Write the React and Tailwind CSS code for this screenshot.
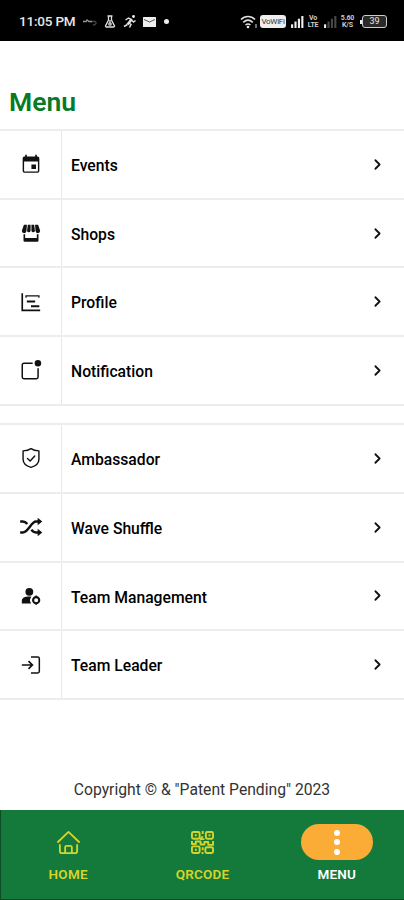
import { ChevronRight } from "lucide-react";

const icons = {
  events: (
    <path fill="currentColor" d="M20 3h-1V1h-2v2H7V1H5v2H4a2 2 0 0 0-2 2v15.500a2 2 0 0 0 2 2h16a2 2 0 0 0 2-2V5a2 2 0 0 0-2-2zm.3 17.500a.5.5 0 0 1-.5.500H4.200a.5.5 0 0 1-.5-.500V9h16.600zM18 12.500h-5.500V18H18z" />
  ),
  shops: (
    <g fill="currentColor">
      <path d="M3.500 2h3.600l-.5 7.400a2.700 2.700 0 0 1-5.600 0z" />
      <path d="M8.200 2h3.300v7.500a2.200 2.200 0 0 1-4.200 0z" />
      <path d="M12.500 2h3.300l.9 7.500a2.200 2.200 0 0 1-4.200 0z" />
      <path d="M16.900 2h3.600L23 9.400a2.700 2.700 0 0 1-5.600 0z" />
      <path d="M3 13.500h2V18h14v-4.500h2V21a1.500 1.500 0 0 1-1.500 1.500h-15A1.500 1.500 0 0 1 3 21z" />
    </g>
  ),
  profile: (
    <g fill="none" stroke="currentColor" strokeWidth="2">
      <path d="M1.500 1.500V22H23" />
      <path d="M6 7V4.500h15.500V7" strokeWidth="1.500" />
      <path d="M7 11.500h10M12 17h10" strokeWidth="2.400" />
    </g>
  ),
  notification: (
    <g fill="none" stroke="currentColor" strokeWidth="1.800">
      <path d="M14 4H3.500A2 2 0 0 0 1.500 6v14.500a2 2 0 0 0 2 2h15a2 2 0 0 0 2-2V10" />
      <circle cx="20.300" cy="3.800" r="3.900" fill="currentColor" stroke="none" />
    </g>
  ),
  ambassador: (
    <g fill="none" stroke="currentColor" strokeWidth="1.700" strokeLinecap="round" strokeLinejoin="round">
      <path d="M12 .800c2.700 2 5.700 2.600 9.500 2.600v10c0 5-3.500 8-9.500 9.800-6-1.800-9.500-4.800-9.500-9.800v-10C6.300 3.400 9.300 2.800 12 .8z" />
      <path d="m7.800 12.500 3.200 3 5.500-6" />
    </g>
  ),
  shuffle: (
    <g fill="none" stroke="currentColor" strokeWidth="3">
      <path d="M-1 5.500h3c2.500 0 4.300 1.400 5.600 3M-1 18.500h3C9 18.500 12 5.500 18 5.500h2.500M12.500 15.200c1.300 2 3 3.300 5.500 3.300h2.500" />
      <path d="M20 1v9l5.500-4.500zM20 14v9l5.500-4.500z" fill="currentColor" stroke="none" />
    </g>
  ),
  team: (
    <g fill="currentColor">
      <circle cx="10" cy="7" r="4.700" />
      <path d="M1 21v-3c0-3.800 3.500-5.300 9-5.300 1 0 1.800.1 2.500.2a6.500 6.500 0 0 0-.3 8.100z" />
      <circle cx="18.200" cy="17" r="3.700" fill="none" stroke="currentColor" strokeWidth="2.500" />
      <path d="M17.300 11.500h1.800v2h-1.800zM17.300 20.500h1.800v2h-1.800z" />
    </g>
  ),
  leader: (
    <g fill="none" stroke="currentColor" strokeWidth="1.800">
      <path d="M12 2.500h8a2 2 0 0 1 2 2v15a2 2 0 0 1-2 2h-8" />
      <path d="M1 12h12.500M9 7.300 13.700 12 9 16.700" strokeWidth="2" />
    </g>
  ),
};

const groups = [
  [
    { icon: "events", label: "Events" },
    { icon: "shops", label: "Shops" },
    { icon: "profile", label: "Profile" },
    { icon: "notification", label: "Notification" },
  ],
  [
    { icon: "ambassador", label: "Ambassador" },
    { icon: "shuffle", label: "Wave Shuffle" },
    { icon: "team", label: "Team Management" },
    { icon: "leader", label: "Team Leader" },
  ],
];

function Signal({ dim }) {
  return (
    <svg viewBox="0 0 14 13" className="h-3 w-[13px] shrink-0" fill="#eee">
      <path d="M0 9h2.300v4H0z" />
      <path d="M3.700 6H6v7H3.700zM7.400 3h2.300v10H7.400zM11.100 0h2.300v13h-2.300z" opacity={dim ? 0.3 : 1} />
    </svg>
  );
}

function StatusBar() {
  return (
    <div className="flex h-[41px] items-center bg-black pt-0.5 pl-[19px] text-[#e8e8e8]">
      <span className="w-[57px] text-[13.5px] font-medium tracking-[-0.2px] whitespace-nowrap">11:05 PM</span>
      <svg viewBox="0 0 14 10" className="ml-[7px] h-2.5 w-3.5" fill="none" strokeWidth="1.300">
        <path d="M0 4.500h3l1-1.500 2 1.500h3" stroke="#999" />
        <path d="M9 4.500h3c2 1 1 3.500-2 3.500" stroke="#444" />
      </svg>
      <svg viewBox="0 0 12 13" className="ml-[7px] h-[13px] w-3" fill="none" stroke="#e0e0e0" strokeWidth="1.300">
        <path d="M3.500 1h5M4.500 1v4L1.500 11a1 1 0 0 0 1 1h7a1 1 0 0 0 1-1l-3-6V1M6 5v3" />
        <circle cx="6" cy="9" r="1.200" />
      </svg>
      <svg viewBox="0 0 13 13" className="ml-[7px] h-[13px] w-[13px]" fill="none" stroke="#e0e0e0" strokeWidth="1.500">
        <circle cx="10.500" cy="1.500" r="1.400" fill="#eee" stroke="none" />
        <path d="M2.500 5 5.500 3l3 1.500L5.500 8.500" />
        <path d="m8.500 4.500-4 5" strokeWidth="2.500" />
        <path d="M6 8l2 1.500-1.500 3M9 5.500l1.500 1.500 2-1.500M4.500 9.500l-3.500 2" />
      </svg>
      <svg viewBox="0 0 13 10" className="ml-[7px] h-2.5 w-[13px]">
        <rect width="13" height="10" rx="0.500" fill="#eee" />
        <path d="m1 2.500 5.500 2.500L12 2.500" fill="none" stroke="#555" />
      </svg>
      <span className="ml-2 size-[5px] rounded-full bg-[#eee]" />

      <div className="ml-auto flex items-center pr-[17px]">
        <svg viewBox="0 0 18 14" className="h-3.5 w-[18px]" fill="none" stroke="#e0e0e0" strokeWidth="1.600">
          <path d="M1 4.500c4-4 10-4 14 0M3.300 7.300c3-2.700 6.400-2.700 9.400 0M5.500 10c1.700-1.400 3.300-1.400 5 0" />
          <circle cx="8" cy="12" r="1.300" fill="#eee" stroke="none" />
          <path d="M16 9v4" stroke="#888" />
        </svg>
        <span className="ml-0.5 flex h-[13px] w-[26px] items-center justify-center rounded-[3px] bg-[#eee] text-[8px] tracking-[-0.3px] text-[#333]">
          VoWiFi
        </span>
        <span className="ml-[5px] flex"><Signal /></span>
        <span className="ml-[3px] w-3 text-center text-[7px] leading-[7px] font-bold tracking-[-0.3px] text-[#ccc]">Vo<br />LTE</span>
        <span className="ml-[5px] flex"><Signal dim /></span>
        <span className="ml-[3px] w-[15px] text-center text-[7px] leading-[7px] font-bold tracking-[-0.2px] text-[#ccc]">5.60<br />K/S</span>
        <span className="ml-[5px] h-1 w-0.5 bg-[#eee]" />
        <span className="flex h-[13px] w-[25px] items-center justify-center rounded-[3px] border-[1.5px] border-[#ccc] bg-[#2a2a2a] text-[9px] leading-none">39</span>
      </div>
    </div>
  );
}

function MenuGroup({ items }) {
  return (
    <div className="border-t-2 border-[#ededed]">
      {items.map((item) => (
        <div key={item.label} className="flex h-[68.7px] items-center border-b-2 border-[#ededed]">
          <div className="flex h-full w-[62px] items-center justify-center border-r border-[#e8e8e8]">
            <svg viewBox="0 0 24 24" className="size-5 overflow-visible text-[#111]">
              {icons[item.icon]}
            </svg>
          </div>
          <span className="flex-1 pt-[3px] pl-[9px] text-[15.7px] font-medium text-black">{item.label}</span>
          <ChevronRight size={17} strokeWidth={2.5} className="mr-[18px] text-[#111]" />
        </div>
      ))}
    </div>
  );
}

function NavItem({ label, children }) {
  return (
    <div className="flex flex-col items-center pt-3.5">
      <div className="flex h-9 items-center justify-center">{children}</div>
      <span className="mt-1 text-[13.5px] tracking-[0.2px]">{label}</span>
    </div>
  );
}

export default function App() {
  return (
    <div className="flex h-[900px] w-[404px] flex-col overflow-hidden bg-white font-['Roboto',sans-serif]">
      <StatusBar />
      <h1 className="h-[88px] pt-[43px] pl-[9px] text-[26.5px] leading-9 font-semibold text-[#087a24]">Menu</h1>
      <MenuGroup items={groups[0]} />
      <div className="h-[17.4px]" />
      <MenuGroup items={groups[1]} />

      <p className="mt-auto mb-[9px] text-center text-[15.7px] leading-[22px] text-[#333]">
        Copyright © &amp; "Patent Pending" 2023
      </p>

      <nav className="grid h-[90px] grid-cols-3 border-b border-l border-[#0d4a26] bg-[#137a3c] font-semibold text-[#d6d42c]">
        <NavItem label="HOME">
          <svg viewBox="0 0 24 26" className="h-[25px] w-[23px]" fill="none" stroke="currentColor" strokeWidth="1.900" strokeLinecap="round" strokeLinejoin="round">
            <path d="M1 12.500 12 2l11 10.500" />
            <path d="M3 15.500V22a2 2 0 0 0 2 2h14a2 2 0 0 0 2-2v-6.500M8.500 24v-6a1.500 1.500 0 0 1 1.500-1.500h4a1.500 1.500 0 0 1 1.500 1.500v6" />
          </svg>
        </NavItem>
        <NavItem label="QRCODE">
          <svg viewBox="0 0 24 24" className="size-[23px]" fill="none" stroke="currentColor" strokeWidth="2" strokeLinejoin="round">
            <rect x="1" y="1" width="8" height="7" rx="1.500" />
            <rect x="15.500" y="1" width="7.500" height="7" rx="1.500" />
            <rect x="1" y="16" width="8" height="7" rx="1.500" />
            <rect x="15" y="17" width="8" height="6" rx="1.500" />
            <path d="M4 4.500h2M18.300 4.500h2M4 19.500h2M12.200 0v3M12.200 5.500 10 8.500h4M1 10.500v3h4v-2.500h5v3h4v-2.500h4v3h5v-4M12.200 17v3M11 23h2" />
          </svg>
        </NavItem>
        <div className="flex flex-col items-center pt-3.5 text-white">
          <div className="flex h-9 w-[72px] flex-col items-center justify-center gap-[3.5px] rounded-full bg-[#fbac36]">
            <span className="size-1.5 rounded-full bg-white" />
            <span className="size-1.5 rounded-full bg-white" />
            <span className="size-1.5 rounded-full bg-white" />
          </div>
          <span className="mt-1 text-[13.5px] tracking-[0.2px]">MENU</span>
        </div>
      </nav>
    </div>
  );
}
